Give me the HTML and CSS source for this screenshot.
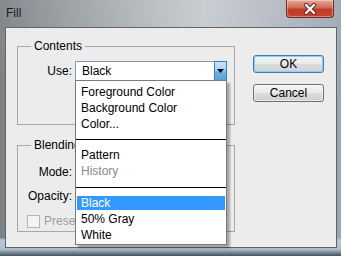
FILE: index.html
```html
<!DOCTYPE html>
<html lang="en">
<head>
  <meta charset="UTF-8">
  <title>Fill</title>
  <link rel="stylesheet" href="styles.css">
</head>
<body>
  <div class="window">
    <div class="titlebar">
      <span class="title">Fill</span>
      <button class="close" aria-label="Close">
        <svg width="16" height="12" viewBox="0 0 16 12">
          <path d="M4 2 L12 10 M12 2 L4 10" stroke="#5a2a22" stroke-width="4.2" stroke-linecap="round"/>
          <path d="M4 2 L12 10 M12 2 L4 10" stroke="#fff" stroke-width="2.4" stroke-linecap="round"/>
        </svg>
      </button>
    </div>
    <div class="frame">
      <div class="client">
        <div class="groups">
          <fieldset class="group contents">
            <legend>Contents</legend>
            <div class="row">
              <label class="lbl">Use:</label>
              <div class="select">
                <span class="value">Black</span>
                <span class="arrow">
                  <svg width="7" height="4" viewBox="0 0 7 4"><path d="M0 0 H7 L3.5 4 Z" fill="#000"/></svg>
                </span>
                <ul class="menu">
                  <li>Foreground Color</li>
                  <li>Background Color</li>
                  <li>Color...</li>
                  <li class="sep"></li>
                  <li>Pattern</li>
                  <li class="disabled">History</li>
                  <li class="sep wide"></li>
                  <li class="active">Black</li>
                  <li>50% Gray</li>
                  <li>White</li>
                </ul>
              </div>
            </div>
          </fieldset>
          <fieldset class="group blending">
            <legend>Blending</legend>
            <div class="row">
              <label class="lbl">Mode:</label>
            </div>
            <div class="row">
              <label class="lbl">Opacity:</label>
            </div>
            <div class="check">
              <span class="box"></span>
              <span class="check-text">Preserve Transparency</span>
            </div>
          </fieldset>
        </div>
        <div class="buttons">
          <button class="btn default">OK</button>
          <button class="btn">Cancel</button>
        </div>
      </div>
    </div>
  </div>
</body>
</html>
```

FILE: styles.css
```css
body {
  margin: 0;
  font-family: "Liberation Sans", Arial, sans-serif;
  font-size: 12px;
  color: #000;
}

.window {
  width: 341px;
  height: 256px;
  overflow: hidden;
  display: flex;
  flex-direction: column;
  background:
    linear-gradient(180deg, rgba(255,255,255,0.08) 0%, rgba(0,0,0,0) 40%),
    linear-gradient(90deg, #7b8085 0%, #979ca1 20%, #b7bbbf 45%, #c6cacf 60%, #b3bac2 80%, #9ba6b3 100%);
}

.titlebar {
  height: 27px;
  display: flex;
  align-items: flex-start;
  justify-content: space-between;
  padding: 0 6px 0 6px;
}

.title {
  margin-top: 6px;
  color: #1b1b22;
  font-size: 12px;
}

.close {
  width: 48px;
  height: 18px;
  margin: 0 1px 0 0;
  padding: 0;
  border: 1px solid #6e2a20;
  border-top: none;
  border-radius: 0 0 4px 4px;
  background: linear-gradient(180deg, #e6a89a 0%, #d46a56 45%, #c23a26 55%, #c5452f 100%);
  display: flex;
  align-items: center;
  justify-content: center;
  box-shadow: inset 0 0 0 1px rgba(255,255,255,0.35);
}

.frame {
  flex: 1;
  padding: 0 4px 8px 5px;
  display: flex;
  background: linear-gradient(180deg, rgba(0,0,0,0) 92%, #b9c8d6 93%, #aebfcf 97%, #46505a 100%);
}

.client {
  flex: 1;
  background: #ececec;
  border: 1px solid #5f656b;
  display: grid;
  grid-template-columns: 218px 71px;
  column-gap: 18px;
  align-items: start;
  padding: 11px 0 0 11px;
}

.group {
  margin: 0;
  padding: 8px 0 0 0;
  border: 1px solid #a8a8a8;
  min-width: 0;
}

.group legend {
  padding: 0 3px;
  margin-left: 13px;
  line-height: 14px;
}

.contents {
  height: 86px;
  box-sizing: border-box;
}

.blending {
  margin-top: 13px;
  padding-top: 10px;
  height: 94px;
  box-sizing: border-box;
}

.row {
  display: flex;
  align-items: center;
  height: 20px;
  margin-bottom: 4px;
}

.lbl {
  width: 54px;
  text-align: right;
  margin-right: 3px;
}

.select {
  position: relative;
  width: 152px;
  height: 20px;
  box-sizing: border-box;
  border: 1px solid #8a9aab;
  background: #fff;
  display: flex;
  align-items: center;
}

.select .value {
  flex: 1;
  padding-left: 6px;
}

.arrow {
  width: 13px;
  height: 20px;
  margin: -1px -1px -1px 0;
  box-sizing: border-box;
  border: 1px solid #3c7fb1;
  background: linear-gradient(180deg, #c5e4f7 0%, #a4d2f1 45%, #6eb2e2 55%, #5aa2d6 100%);
  display: flex;
  align-items: center;
  justify-content: center;
}

.menu {
  position: absolute;
  left: -1px;
  top: 18px;
  width: 152px;
  box-sizing: border-box;
  margin: 0;
  padding: 3px 0 0 0;
  list-style: none;
  background: #fff;
  border: 1px solid #7a7a7a;
  box-shadow: 3px 3px 2px rgba(0, 0, 0, 0.3);
  height: 165px;
  z-index: 2;
}

.menu li {
  height: 16px;
  line-height: 16px;
  padding-left: 5px;
}

.menu li.sep {
  height: 15px;
  padding: 0;
  display: flex;
  align-items: center;
}

.menu li.sep.wide {
  height: 16px;
}

.menu li.sep::after {
  content: "";
  flex: 1;
  height: 1px;
  background: #000;
}

.menu li.disabled {
  color: #8a8a8a;
}

.menu li.active {
  height: 14px;
  line-height: 14px;
  background: #3399ff;
  background-clip: padding-box;
  border-top: 1px solid transparent;
  border-bottom: 1px solid transparent;
  color: #fff;
  margin: 0 1px;
  padding-left: 4px;
}

.check {
  display: flex;
  align-items: center;
  margin: 8px 0 0 9px;
  width: 48px;
  overflow: hidden;
  white-space: nowrap;
}

.box {
  flex: none;
  width: 11px;
  height: 11px;
  border: 1px solid #b6b6b6;
  background: #f4f4f4;
  margin-right: 4px;
}

.check-text {
  color: #9c9c9c;
}

.buttons {
  display: flex;
  flex-direction: column;
  gap: 11px;
  padding-top: 16px;
}

.btn {
  width: 71px;
  height: 18px;
  padding: 0;
  font-family: "Liberation Sans", Arial, sans-serif;
  font-size: 12px;
  color: #000;
  border: 1px solid #707070;
  border-radius: 3px;
  background: linear-gradient(180deg, #f2f2f2 0%, #ebebeb 48%, #dddddd 52%, #cfcfcf 100%);
  box-shadow: inset 0 0 0 1px rgba(255, 255, 255, 0.6);
}

.btn.default {
  border-color: #3c7fb1;
  box-shadow: inset 0 0 0 1px #8fd0f0;
  background: linear-gradient(180deg, #f0f2f3 0%, #e8ebec 48%, #dadddf 52%, #ced3d6 100%);
}
```
